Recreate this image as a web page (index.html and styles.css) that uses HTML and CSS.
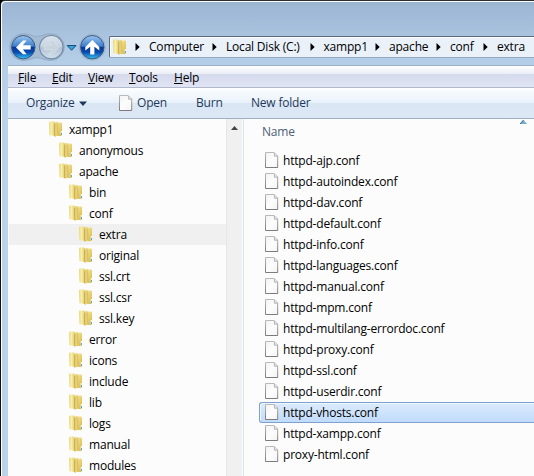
FILE: index.html
```html
<!DOCTYPE html>
<html lang="en">
<head>
<meta charset="utf-8">
<title>extra</title>
<link rel="stylesheet" href="styles.css">
</head>
<body>
<svg class="defs" width="0" height="0">
  <defs>
    <linearGradient id="gBack" x1="0" x2="1" y1="0" y2="0"><stop offset="0" stop-color="#e6d471"/><stop offset=".4" stop-color="#f9f0ae"/><stop offset="1" stop-color="#e0c865"/></linearGradient>
    <linearGradient id="gFront" x1="0" x2="1" y1="0" y2="1"><stop offset="0" stop-color="#f8eda6"/><stop offset="1" stop-color="#d8b53e"/></linearGradient>
    <linearGradient id="gPage" x1="0" x2="1" y1="0" y2="1"><stop offset="0" stop-color="#f2f2f2"/><stop offset=".5" stop-color="#fdfdfd"/><stop offset="1" stop-color="#f3f3f3"/></linearGradient>
    <linearGradient id="gEdge" x1="0" x2="0" y1="0" y2="1"><stop offset="0" stop-color="#b9b9b9"/><stop offset="1" stop-color="#7c7c7c"/></linearGradient>
    <linearGradient id="gOrb" x1="0" x2="0" y1="0" y2="1"><stop offset="0" stop-color="#9cc6ec"/><stop offset=".46" stop-color="#3c7fd0"/><stop offset=".5" stop-color="#07379a"/><stop offset=".72" stop-color="#0a4bb0"/><stop offset="1" stop-color="#35c5f5"/></linearGradient>
    <linearGradient id="gOff" x1="0" x2="0" y1="0" y2="1"><stop offset="0" stop-color="#d9e4ee"/><stop offset=".48" stop-color="#c6d4e2"/><stop offset=".52" stop-color="#b3c4d5"/><stop offset="1" stop-color="#cfdfed"/></linearGradient>
    <symbol id="folder" viewBox="0 0 14 16">
      <path d="M7 1.5h5l1 1V14l-1 1H7z" fill="url(#gFront)"/>
      <path d="M0 1.5L.8.5H5l1 1V15L.5 14.2z" fill="url(#gBack)"/>
      <path d="M6 1.8L8 1l1 1v12l-3 2z" fill="#e6d078"/>
      <path d="M5.6 3v12.3" stroke="#c2a548" stroke-width=".8"/>
      <path d="M8.8 3v11" stroke="#cdb055" stroke-width=".6"/>
      <path d="M11.7 10h1.3v4h-1.3z" fill="#f3f6e5"/><path d="M12 12h1v2h-1z" fill="#4aa8dc"/>
    </symbol>
    <symbol id="page" viewBox="0 0 14 16">
      <path d="M.5.5h8.7l3.5 3.5v11.5H.5z" fill="url(#gPage)" stroke="url(#gEdge)"/>
      <path d="M9.4.8v3.4h3.3" fill="#e8e8e8" stroke="#b2b2b2"/>
    </symbol>
    <symbol id="chev" viewBox="0 0 5 8"><path d="M.5 0v8L4.7 4z" fill="#000"/></symbol>
  </defs>
</svg>
<div class="window">
  <header class="nav">
    <svg class="orbs" width="98" height="30" viewBox="8 32 98 30">
      <path d="M23 33.8c8 0 9 2.6 14 2.6s7-2.6 14-2.6a13.3 13.3 0 0 1 0 26.6c-7 0-9-2.6-14-2.6s-6 2.6-14 2.6a13.3 13.3 0 0 1 0-26.6z" fill="#a3bbd3" stroke="#8ba6c2" stroke-width=".8"/>
      <circle cx="92.3" cy="47.2" r="13.1" fill="#a5bdd5" stroke="#98b1cc" stroke-width=".7"/>
      <circle cx="23.3" cy="47.2" r="11.7" fill="url(#gOrb)" stroke="#3c587f" stroke-width="1"/>
      <circle cx="51.3" cy="47.2" r="11.7" fill="url(#gOff)" stroke="#72879e" stroke-width="1.1"/>
      <circle cx="92.3" cy="47.2" r="11.7" fill="url(#gOrb)" stroke="#3c587f" stroke-width="1"/>
      <path d="M16 47.4l7-6.9h3.6l-3.7 4.8h7.8v4.2h-7.8l3.7 4.8H23z" fill="#fff"/>
      <path d="M59 47.4l-7-6.9h-3.6l3.7 4.8h-7.8v4.2h7.8l-3.7 4.8H52z" fill="#c8d3de" stroke="#dde5ed" stroke-width=".6"/>
      <path d="M92.3 40l7 6.9v3.6l-4.9-3.7v7.8h-4.2v-7.8l-4.9 3.7v-3.6z" fill="#fff"/>
      <path d="M67.2 45.5h8.8l-4.4 4.8z" fill="#38a5d8" stroke="#174f80"/>
    </svg>
    <div class="address">
      <svg class="icon"><use href="#folder"/></svg>
      <svg class="chev c1"><use href="#chev"/></svg><span class="t w1">Computer</span>
      <svg class="chev"><use href="#chev"/></svg><span class="t w2">Local Disk (C:)</span>
      <svg class="chev"><use href="#chev"/></svg><span class="t w3">xampp1</span>
      <svg class="chev"><use href="#chev"/></svg><span class="t w4">apache</span>
      <svg class="chev"><use href="#chev"/></svg><span class="t w5">conf</span>
      <svg class="chev"><use href="#chev"/></svg><span class="t">extra</span>
    </div>
  </header>
  <nav class="menu"><span class="m1"><u>F</u>ile</span><span class="m2"><u>E</u>dit</span><span class="m3"><u>V</u>iew</span><span class="m4"><u>T</u>ools</span><span><u>H</u>elp</span></nav>
  <div class="toolbar">
    <span class="organize">Organize</span><svg class="drop" width="8" height="5" viewBox="0 0 8 5"><path d="M0 .5h8L4 5z" fill="#1e395b"/></svg>
    <svg class="icon"><use href="#page"/></svg><span class="open">Open</span><span class="burn">Burn</span><span>New folder</span>
  </div>
  <main class="content">
    <div class="tree">
      <div class="row l0"><svg class="icon"><use href="#folder"/></svg><span>xampp1</span></div>
      <div class="row l1"><svg class="icon"><use href="#folder"/></svg><span>anonymous</span></div>
      <div class="row l1"><svg class="icon"><use href="#folder"/></svg><span>apache</span></div>
      <div class="row l2"><svg class="icon"><use href="#folder"/></svg><span>bin</span></div>
      <div class="row l2"><svg class="icon"><use href="#folder"/></svg><span>conf</span></div>
      <div class="row l3 current"><svg class="icon"><use href="#folder"/></svg><span>extra</span></div>
      <div class="row l3"><svg class="icon"><use href="#folder"/></svg><span>original</span></div>
      <div class="row l3"><svg class="icon"><use href="#folder"/></svg><span>ssl.crt</span></div>
      <div class="row l3"><svg class="icon"><use href="#folder"/></svg><span>ssl.csr</span></div>
      <div class="row l3"><svg class="icon"><use href="#folder"/></svg><span>ssl.key</span></div>
      <div class="row l2"><svg class="icon"><use href="#folder"/></svg><span>error</span></div>
      <div class="row l2"><svg class="icon"><use href="#folder"/></svg><span>icons</span></div>
      <div class="row l2"><svg class="icon"><use href="#folder"/></svg><span>include</span></div>
      <div class="row l2"><svg class="icon"><use href="#folder"/></svg><span>lib</span></div>
      <div class="row l2"><svg class="icon"><use href="#folder"/></svg><span>logs</span></div>
      <div class="row l2"><svg class="icon"><use href="#folder"/></svg><span>manual</span></div>
      <div class="row l2"><svg class="icon"><use href="#folder"/></svg><span>modules</span></div>
    </div>
    <div class="scroll"><svg width="7" height="4" viewBox="0 0 7 4"><path d="M3.5 0L7 4H0z" fill="#444"/></svg></div>
    <div class="files">
      <div class="head"><span>Name</span><svg width="7" height="4" viewBox="0 0 7 4"><path d="M3.5 0L7 4H0z" fill="#6fb0d2"/><path d="M3.5 0L0 4" stroke="#3c5e72"/></svg></div>
      <div class="row"><svg class="icon"><use href="#page"/></svg><span>httpd-ajp.conf</span></div>
      <div class="row"><svg class="icon"><use href="#page"/></svg><span>httpd-autoindex.conf</span></div>
      <div class="row"><svg class="icon"><use href="#page"/></svg><span>httpd-dav.conf</span></div>
      <div class="row"><svg class="icon"><use href="#page"/></svg><span>httpd-default.conf</span></div>
      <div class="row"><svg class="icon"><use href="#page"/></svg><span>httpd-info.conf</span></div>
      <div class="row"><svg class="icon"><use href="#page"/></svg><span>httpd-languages.conf</span></div>
      <div class="row"><svg class="icon"><use href="#page"/></svg><span>httpd-manual.conf</span></div>
      <div class="row"><svg class="icon"><use href="#page"/></svg><span>httpd-mpm.conf</span></div>
      <div class="row"><svg class="icon"><use href="#page"/></svg><span>httpd-multilang-errordoc.conf</span></div>
      <div class="row"><svg class="icon"><use href="#page"/></svg><span>httpd-proxy.conf</span></div>
      <div class="row"><svg class="icon"><use href="#page"/></svg><span>httpd-ssl.conf</span></div>
      <div class="row"><svg class="icon"><use href="#page"/></svg><span>httpd-userdir.conf</span></div>
      <div class="row selected"><svg class="icon"><use href="#page"/></svg><span>httpd-vhosts.conf</span></div>
      <div class="row"><svg class="icon"><use href="#page"/></svg><span>httpd-xampp.conf</span></div>
      <div class="row"><svg class="icon"><use href="#page"/></svg><span>proxy-html.conf</span></div>
    </div>
  </main>
</div>
</body>
</html>
```
FILE: styles.css
```css
* { box-sizing: border-box; }
body { margin: 0; background: #000; overflow: hidden; font: 12px/20px "Open Sans", "Noto Sans", sans-serif; letter-spacing: -0.2px; color: #000; }
.defs { position: absolute; }
.window { width: 534px; height: 476px; overflow: hidden; border-top: 1px solid #2b2d35; border-left: 1px solid #101014; box-shadow: inset 1px 1px #fff; border-top-left-radius: 5px; padding: 1px 0 0 7px; background: linear-gradient(#9ab4d2, #b5cee8 60px, #bbd3ea 120px); white-space: nowrap; }
.icon { width: 14px; height: 16px; flex: none; }
.nav { height: 63px; display: flex; padding-top: 30px; }
.orbs { flex: none; margin-right: 3px; }
.address { flex: 1; height: 22px; margin-top: 4px; border: 1px solid #5b6b7e; border-right: 0; border-bottom-color: #94abc4; border-radius: 2px 0 0 2px; background: #eaf1f9; box-shadow: inset 1px 1px #fff; display: flex; align-items: center; padding-left: 3px; }
.chev { width: 5px; height: 8px; flex: none; }
.c1 { margin-left: 8px; }
.t { flex: none; margin-left: 9px; }
.w1 { width: 63px; } .w2 { width: 83.5px; } .w3 { width: 51.5px; } .w4 { width: 47px; } .w5 { width: 33px; }
.menu { height: 23px; border-top: 1px solid #9eb0c6; border-bottom: 1px solid #b3b9cc; background: linear-gradient(#fff, #eaeef6 8px, #d5daed 8px, #e0e4f3); display: flex; padding-left: 10px; line-height: 23px; }
.m1 { width: 34px; } .m2 { width: 36px; } .m3 { width: 41px; } .m4 { width: 45px; }
u { text-underline-offset: 1px; text-decoration-thickness: 1px; }
.toolbar { height: 31px; border-bottom: 1px solid #a0afc3; background: linear-gradient(#fcfeff, #e8f1fb 15px, #dbe6f4 15px, #dde8f6); display: flex; align-items: center; padding-left: 18px; color: #1e395b; }
.organize { width: 53px; }
.drop { margin-right: 32px; }
.open { width: 59px; margin-left: 4px; } .burn { width: 55px; }
.content { height: 357px; display: flex; background: #fcfcfc; }
.tree { width: 218px; flex: none; padding-left: 1px; }
.row { height: 21px; display: flex; align-items: center; gap: 6px; padding-bottom: 1px; }
.row span { padding-top: 2px; }
.l0 { padding-left: 40px; } .l1 { padding-left: 50px; } .l2 { padding-left: 60px; } .l3 { padding-left: 70px; }
.current { background: #f0f0f0; }
.scroll { width: 16px; flex: none; background: #f0f0f0; border-left: 1px solid #e6e6e6; display: flex; justify-content: center; padding-top: 7px; }
.files { flex: 1; margin-left: 1px; border-left: 1px solid #d9e5f2; padding-left: 15px; }
.head { height: 31px; display: flex; justify-content: space-between; padding: 3px 7px 0 3px; color: #4c607a; }
.head svg { margin-top: -2px; }
.files .row { gap: 4px; padding-left: 6px; }
.files .selected { border: 1px solid #7da2ce; border-right: 0; border-radius: 3px 0 0 3px; background: linear-gradient(#dcebfc, #c1dbfc); box-shadow: inset 1px 1px #edf5fe; padding: 0 0 1px 5px; }
```
